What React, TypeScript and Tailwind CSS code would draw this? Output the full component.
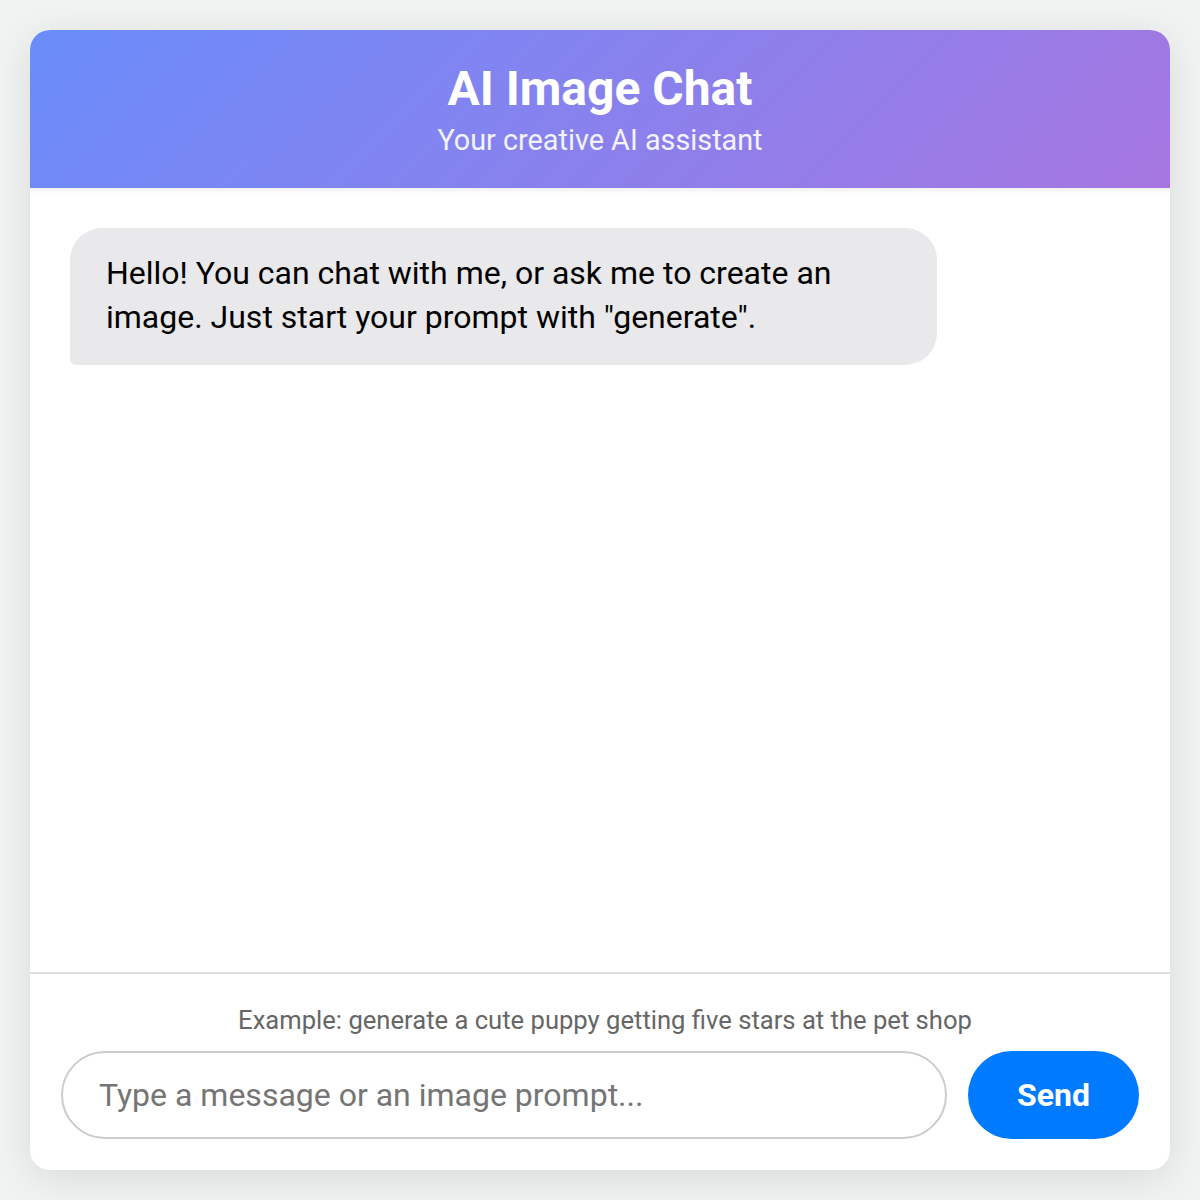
export default function App() {
  return (
    <div className="flex h-[1200px] w-[1200px] items-center justify-center bg-[#f1f3f3] font-['Roboto',sans-serif]">
      <div className="flex h-[1140px] w-[1140px] flex-col overflow-hidden rounded-[20px] bg-white shadow-[0_8px_40px_rgba(0,0,0,0.1)]">
        <header className="relative z-10 flex h-[158px] shrink-0 flex-col items-center justify-center bg-[linear-gradient(135deg,#6a8dfb,#a676e0)] text-white shadow-[0_3px_4px_rgba(0,0,0,0.06)]">
          <h1 className="text-[48px] font-bold leading-[56px]">AI Image Chat</h1>
          <p className="mt-[5px] text-[28.8px] leading-[36px] text-white/90">Your creative AI assistant</p>
        </header>

        <main className="flex-1 px-[40px] pt-[40px]">
          <div className="max-w-[867px] rounded-[32px] rounded-bl-[6px] bg-[#e9e9eb] px-[36px] pb-[26px] pt-[23px] text-[32px] leading-[44px] text-black">
            Hello! You can chat with me, or ask me to create an image. Just start your prompt with "generate".
          </div>
        </main>

        <footer className="shrink-0 border-t-2 border-[#e0e0e0] px-[31px] pb-[31px] pt-[28px]">
          <p className="pl-[10px] text-center text-[25.6px] leading-[36px] text-[#666]">
            Example: generate a cute puppy getting five stars at the pet shop
          </p>
          <div className="mt-[13px] flex gap-[21px]">
            <input
              type="text"
              placeholder="Type a message or an image prompt..."
              className="h-[88px] min-w-0 flex-1 rounded-full border-2 border-[#ccc] px-[36px] text-[32px] outline-none placeholder:text-[#757575]"
            />
            <button
              type="button"
              className="h-[88px] w-[171px] rounded-[44px] bg-[#007bff] text-[32px] font-bold text-white"
            >
              Send
            </button>
          </div>
        </footer>
      </div>
    </div>
  );
}
